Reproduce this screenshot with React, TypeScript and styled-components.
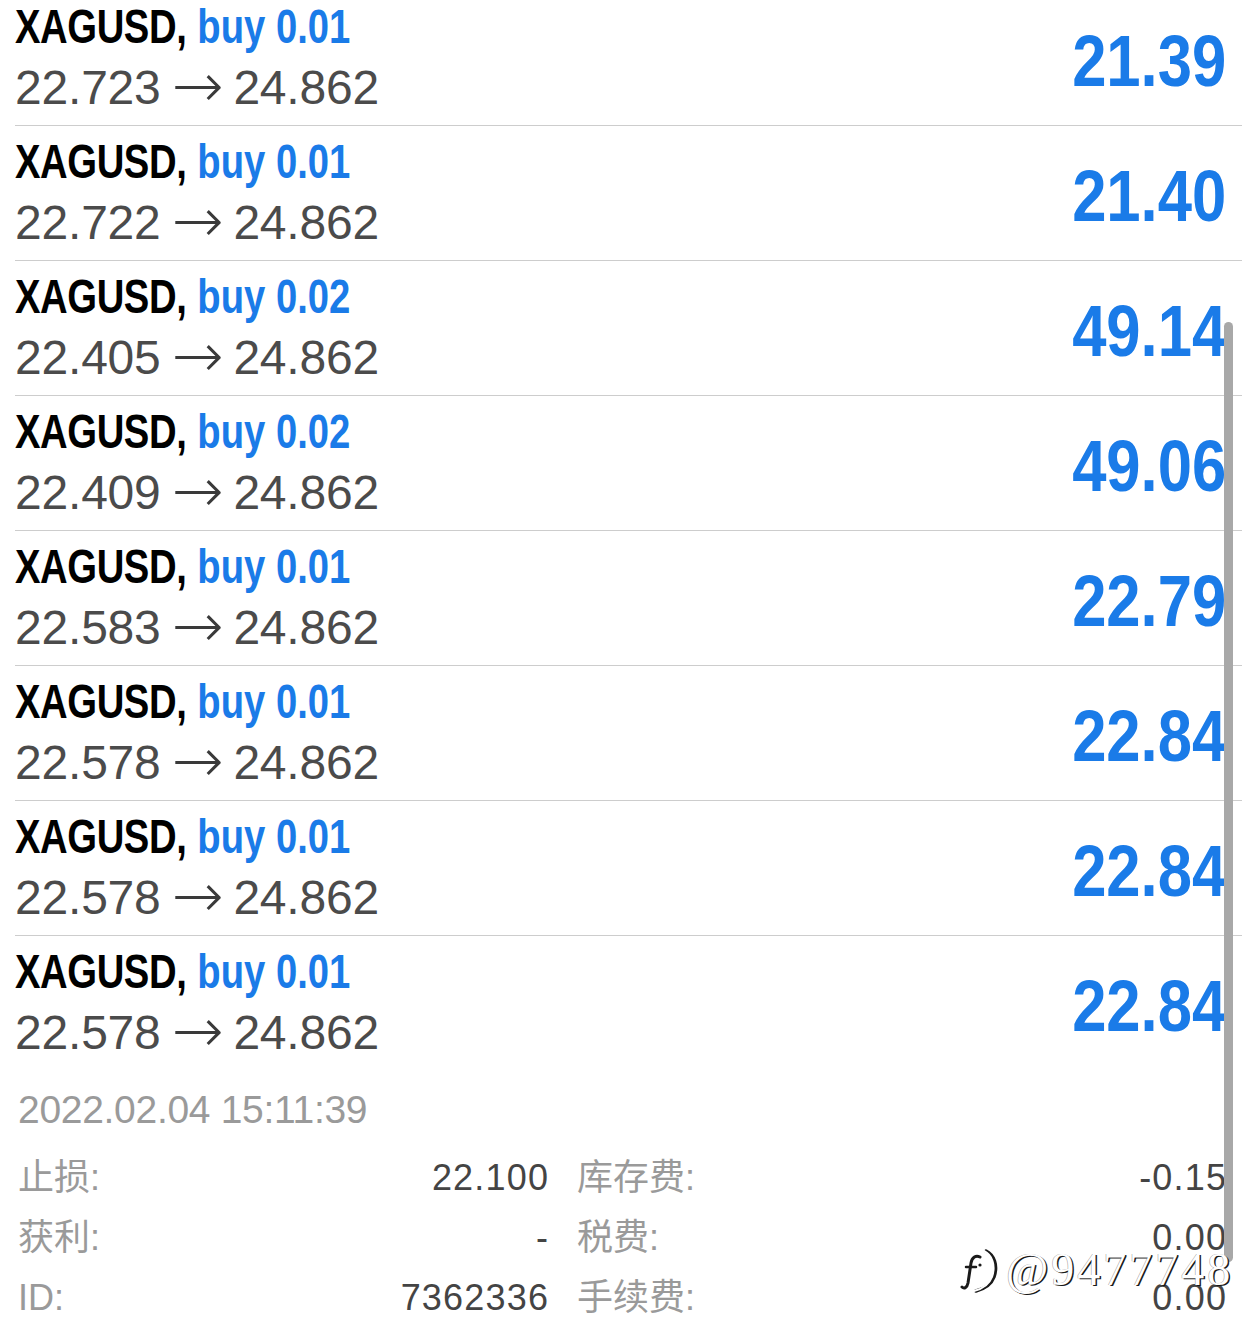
import styled, { createGlobalStyle } from "styled-components";

const GlobalStyle = createGlobalStyle`
  body {
    margin: 0;
    background: #ffffff;
  }
`;

const BLUE = "#1a7be8";

type Position = {
  lots: string;
  open: string;
  close: string;
  profit: string;
};

const positions: Position[] = [
  { lots: "0.01", open: "22.723", close: "24.862", profit: "21.39" },
  { lots: "0.01", open: "22.722", close: "24.862", profit: "21.40" },
  { lots: "0.02", open: "22.405", close: "24.862", profit: "49.14" },
  { lots: "0.02", open: "22.409", close: "24.862", profit: "49.06" },
  { lots: "0.01", open: "22.583", close: "24.862", profit: "22.79" },
  { lots: "0.01", open: "22.578", close: "24.862", profit: "22.84" },
  { lots: "0.01", open: "22.578", close: "24.862", profit: "22.84" },
  { lots: "0.01", open: "22.578", close: "24.862", profit: "22.84" },
];

const details = [
  { label: "止损:", value: "22.100", label2: "库存费:", value2: "-0.15" },
  { label: "获利:", value: "-", label2: "税费:", value2: "0.00" },
  { label: "ID:", value: "7362336", label2: "手续费:", value2: "0.00" },
];

const Page = styled.div`
  position: relative;
  width: 1242px;
  height: 1337px;
  overflow: hidden;
  background: #fff;
`;

const List = styled.div`
  margin-top: -9px;
`;

const Row = styled.div<{ $last?: boolean }>`
  box-sizing: border-box;
  height: 135px;
  margin-left: 15px;
  padding-right: 16px;
  display: flex;
  justify-content: space-between;
  border-bottom: 1px solid ${(p) => (p.$last ? "transparent" : "#cdcdcd")};
`;

const Left = styled.div`
  padding-top: 4px;
`;

// no condensed face installed: squeeze the bold face horizontally
const Title = styled.div`
  display: inline-block;
  font-family: "Liberation Sans", Arial, sans-serif;
  font-weight: 700;
  font-size: 49px;
  line-height: 62px;
  letter-spacing: -0.5px;
  color: #000;
  white-space: nowrap;
  transform: scaleX(0.78);
  transform-origin: left center;
`;

const Side = styled.span`
  color: ${BLUE};
  margin-left: 14px;
  letter-spacing: 0px;
`;

const Prices = styled.div`
  height: 62px;
  font-family: "Liberation Sans", Arial, sans-serif;
  font-size: 48px;
  line-height: 62px;
  letter-spacing: -0.2px;
  color: #4b4b4b;
  white-space: nowrap;
`;

const Arrow = styled.span`
  font-family: "DejaVu Sans", sans-serif;
  font-weight: 200;
  font-size: 62px;
  line-height: 0;
  vertical-align: -3px;
  margin: 0 10px 0 11px;
  color: #3a3a3a;
`;

const Profit = styled.div`
  align-self: center;
  padding-top: 6px;
  font-family: "Liberation Sans", Arial, sans-serif;
  font-weight: 700;
  font-size: 72px;
  line-height: 72px;
  color: ${BLUE};
  transform: scaleX(0.855);
  transform-origin: right center;
`;

const Details = styled.div`
  padding: 0 16px 0 18px;
`;

const DateLine = styled.div`
  margin-top: 14px;
  font-family: "Liberation Sans", Arial, sans-serif;
  font-size: 39px;
  line-height: 50px;
  letter-spacing: -0.3px;
  color: #9a9a9a;
`;

const Grid = styled.div`
  margin-top: 13px;
  display: grid;
  grid-template-columns: 530px 1fr;
  column-gap: 29px;
  grid-auto-rows: 60px;
`;

const Cell = styled.div`
  display: flex;
  justify-content: space-between;
  align-items: center;
  font-size: 36px;
  line-height: 60px;
`;

const Label = styled.span`
  font-family: "Liberation Sans", "Noto Sans CJK SC", sans-serif;
  color: #9a9a9a;
`;

const Value = styled.span`
  font-family: "Liberation Sans", Arial, sans-serif;
  letter-spacing: 1.2px;
  margin-right: -1.2px;
  color: #444;
`;

const Scrollbar = styled.div`
  position: absolute;
  right: 9px;
  top: 322px;
  width: 9px;
  height: 940px;
  border-radius: 5px;
  background: #a8a8a8;
`;

const Watermark = styled.div`
  position: absolute;
  left: 960px;
  top: 1242px;
  display: flex;
  align-items: center;
  gap: 4px;
`;

const MarkText = styled.span`
  font-family: "Liberation Serif", serif;
  font-size: 46px;
  line-height: 56px;
  letter-spacing: 3px;
  color: #ffffff;
  white-space: nowrap;
  text-shadow: 1.5px 1px 0 #1a1a1a, -0.5px -0.5px 0 #9a9a9a;
`;

const Logo = () => (
  <svg width="42" height="50" viewBox="0 0 42 50">
    <g fill="none" strokeLinecap="round">
      <path d="M20 12 C16 10 12 12 11 18 L8 38 C7 43 4 44 2 42" stroke="#1a1a1a" strokeWidth="3" />
      <path d="M6 22 L16 22" stroke="#1a1a1a" strokeWidth="2.5" />
      <path d="M26 6 C34 10 38 20 34 32 C31 40 24 44 16 46" stroke="#1a1a1a" strokeWidth="3.5" />
      <path d="M24 6 C32 10 36 20 32 32 C29 40 22 44 14 46" stroke="#ffffff" strokeWidth="2" />
      <circle cx="20" cy="20" r="1.6" fill="#1a1a1a" />
    </g>
  </svg>
);

export default function App() {
  return (
    <Page>
      <GlobalStyle />
      <List>
        {positions.map((p, i) => (
          <Row key={i} $last={i === positions.length - 1}>
            <Left>
              <Title>
                XAGUSD,<Side>buy {p.lots}</Side>
              </Title>
              <Prices>
                {p.open}
                <Arrow>→</Arrow>
                {p.close}
              </Prices>
            </Left>
            <Profit>{p.profit}</Profit>
          </Row>
        ))}
      </List>
      <Details>
        <DateLine>2022.02.04 15:11:39</DateLine>
        <Grid>
          {details.map((d) => [
            <Cell key={d.label}>
              <Label>{d.label}</Label>
              <Value>{d.value}</Value>
            </Cell>,
            <Cell key={d.label2}>
              <Label>{d.label2}</Label>
              <Value>{d.value2}</Value>
            </Cell>,
          ])}
        </Grid>
      </Details>
      <Scrollbar />
      <Watermark>
        <Logo />
        <MarkText>@9477748</MarkText>
      </Watermark>
    </Page>
  );
}
